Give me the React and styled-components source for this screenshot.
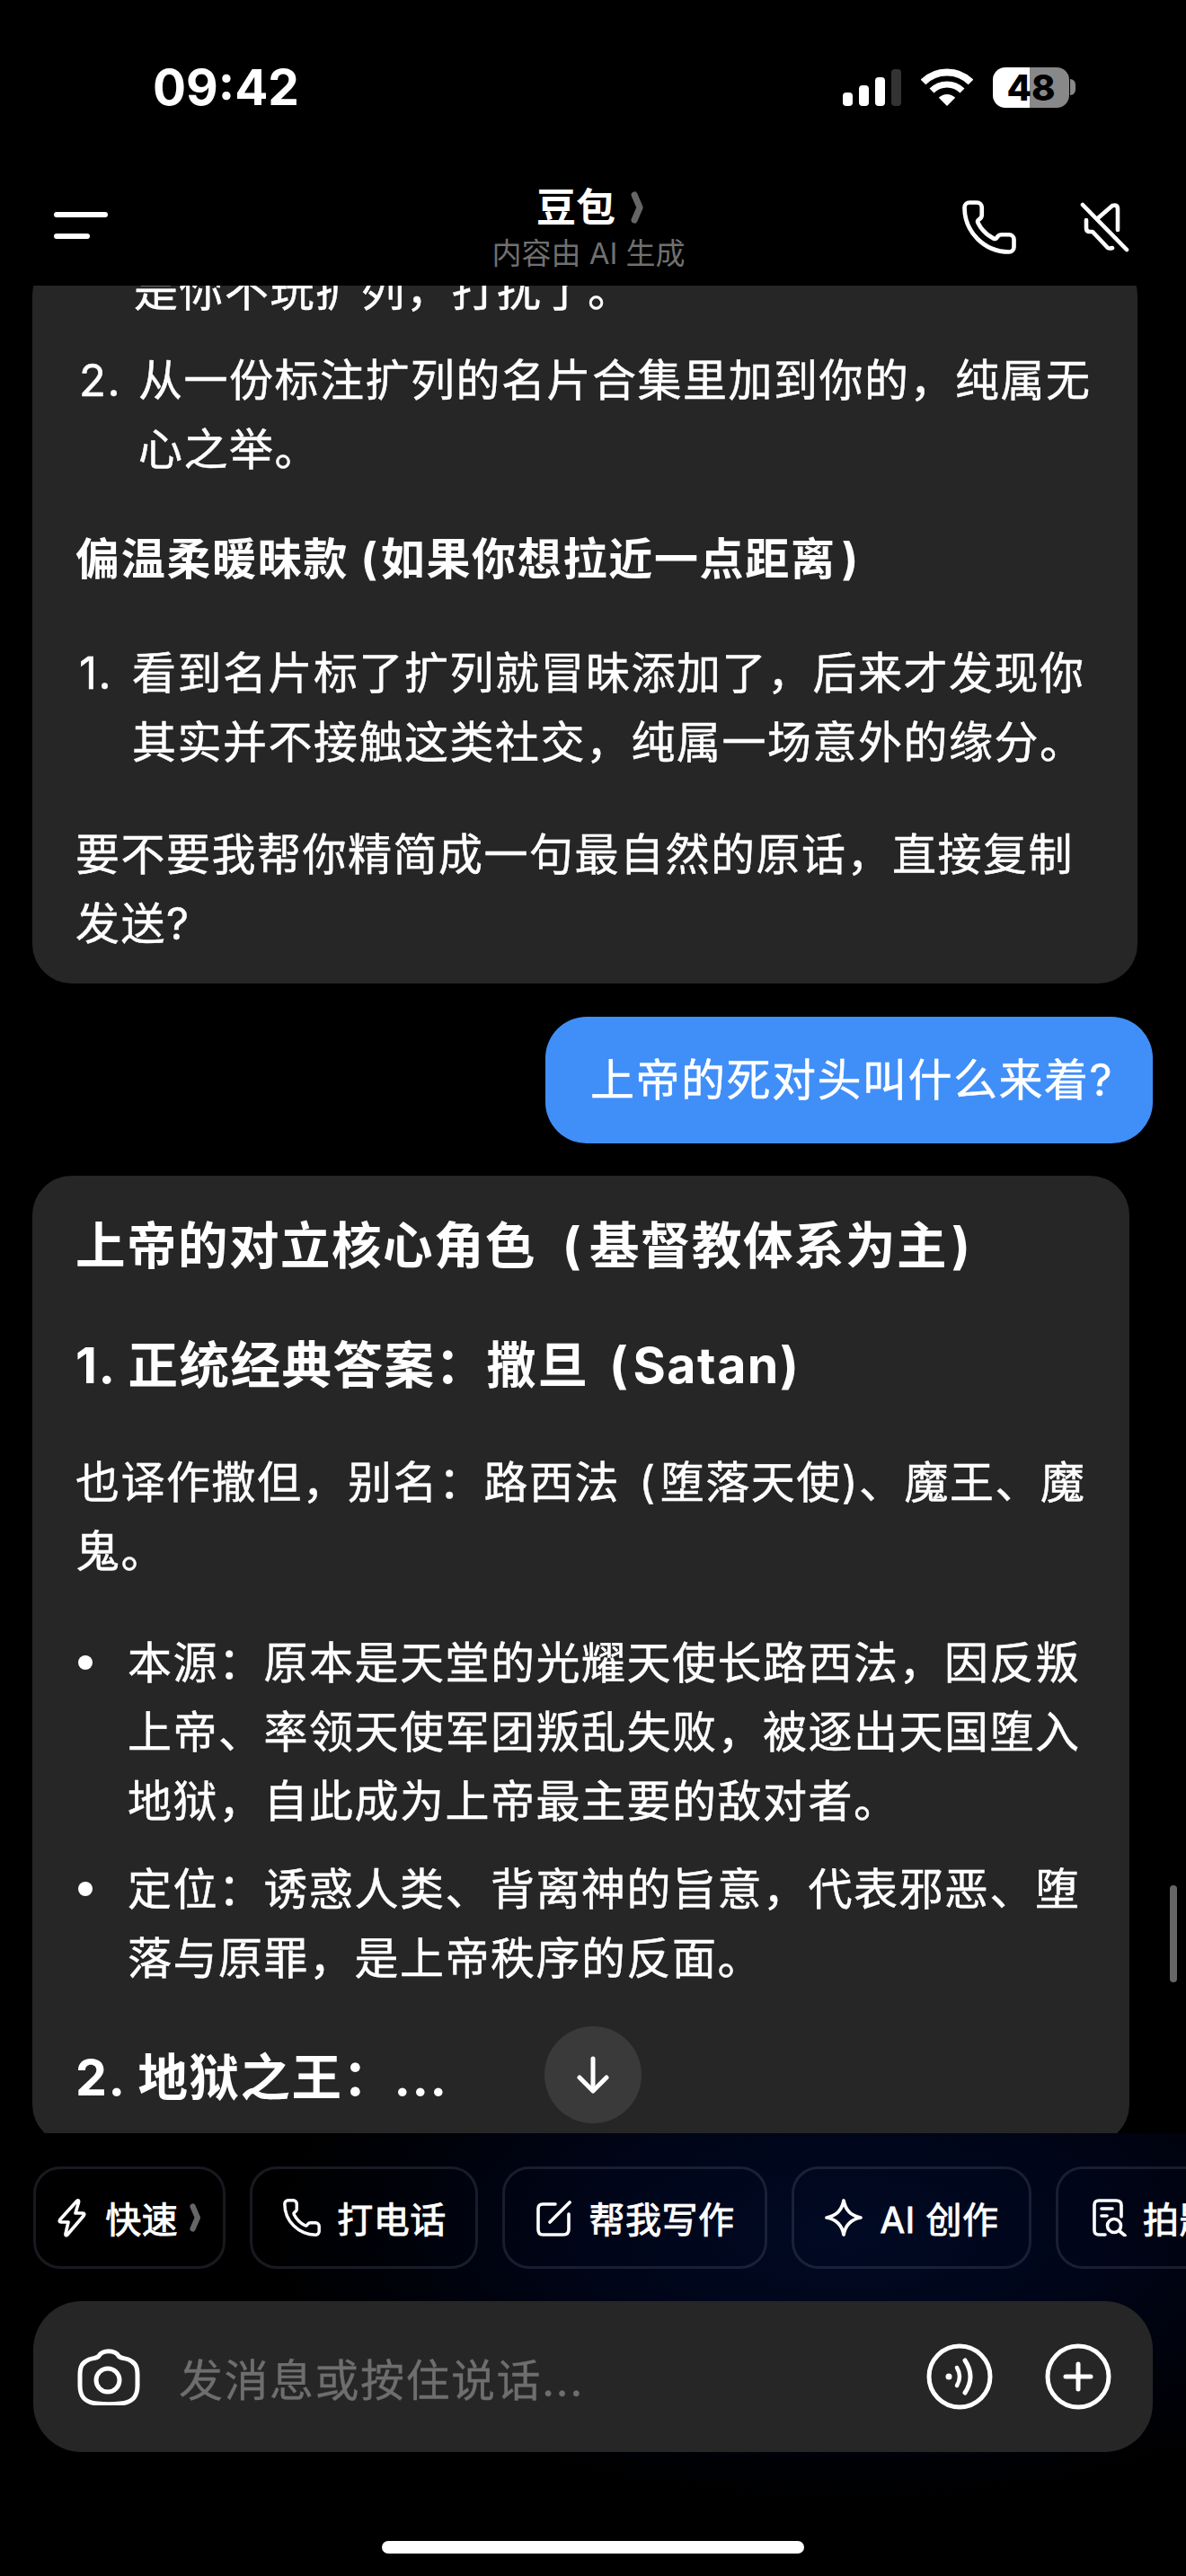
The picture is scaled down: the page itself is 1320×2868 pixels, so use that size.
import styled, { createGlobalStyle } from "styled-components";
import { Phone } from "lucide-react";


const GlobalStyle = createGlobalStyle`
	html, body {
		margin: 0;
		background: #000;
	}

	* { box-sizing: border-box; }
`;


const Signal = () => (
	<svg width="65" height="41" viewBox="0 0 65 41">
		<rect x="0" y="26" width="11" height="15" rx="4" fill="#fff"/>
		<rect x="18" y="18" width="11" height="23" rx="4" fill="#fff"/>
		<rect x="36" y="9" width="11" height="32" rx="4" fill="#fff"/>
		<rect x="54" y="0" width="11" height="41" rx="4" fill="#333"/>
	</svg>
);

const Wifi = () => (
	<svg width="58" height="42" viewBox="0 0 58 42" fill="none" stroke="#fff">
		<path d="M2.5 15.5A37.5 37.5 0 0 1 55.5 15.5" strokeWidth="8"/>
		<path d="M12 25A24 24 0 0 1 46 25" strokeWidth="7"/>
		<path d="M29 42L19.8 32.8A13 13 0 0 1 38.2 32.8Z" fill="#fff" stroke="none"/>
	</svg>
);

const Chevron = ({ size = 36 }) => (
	<svg width={size * 0.45} height={size} viewBox="0 0 16 36" fill="none">
		<path d="M5 4L11 18L5 32" stroke="#666" strokeWidth="7" strokeLinecap="round" strokeLinejoin="round"/>
	</svg>
);

const MuteIcon = () => (
	<svg width="56" height="56" viewBox="0 0 56 56" fill="none" stroke="#fff" strokeWidth="4.6" strokeLinecap="round" strokeLinejoin="round">
		<path d="M3 3L52 53"/>
		<path d="M21 17L36 4Q42 2 42 8V31"/>
		<path d="M7 20V29Q7 33 11 33H14L31 51Q33 52 36 51"/>
	</svg>
);

const ArrowIcon = () => (
	<svg width="38" height="42" viewBox="0 0 38 42" fill="none" stroke="#fff" strokeWidth="5" strokeLinecap="round" strokeLinejoin="round">
		<path d="M19 3V38"/>
		<path d="M4 24L19 39L34 24"/>
	</svg>
);

const Bolt = () => (
	<svg width="34" height="44" viewBox="0 0 34 44" fill="none" stroke="#fff" strokeWidth="3.6" strokeLinejoin="round">
		<path d="M23 3Q25 2 24.5 5L21 17H29Q32 17 30 20L12 41Q9.5 43 10 40L13 27H5Q2 27 4 24Z"/>
	</svg>
);

const WriteIcon = () => (
	<svg width="42" height="42" viewBox="0 0 42 42" fill="none" stroke="#fff" strokeLinecap="round" strokeLinejoin="round">
		<path d="M22 6H8Q3 6 3 11V34Q3 40 8 40H31Q37 40 37 34V17" strokeWidth="3.6"/>
		<path d="M16 26L38 4" strokeWidth="3.8"/>
	</svg>
);

const Star = () => (
	<svg width="44" height="44" viewBox="0 0 44 44" fill="none" stroke="#fff" strokeWidth="3.8" strokeLinejoin="round">
		<path d="M22 3C24 14 30 20 41 22C30 24 24 30 22 41C20 30 14 24 3 22C14 20 20 14 22 3Z"/>
	</svg>
);

const ScanDoc = () => (
	<svg width="38" height="42" viewBox="0 0 38 42" fill="none" stroke="#fff" strokeWidth="3.6" strokeLinecap="round" strokeLinejoin="round">
		<path d="M14 40H7Q2 40 2 35V7Q2 2 7 2H26Q32 2 32 7V20"/>
		<path d="M10 11H22"/>
		<path d="M10 19H16"/>
		<circle cx="24" cy="30" r="7.5"/>
		<path d="M30 36L36 41"/>
	</svg>
);

const Camera = () => (
	<svg width="70" height="64" viewBox="0 0 70 64" fill="none" stroke="#fff" strokeWidth="5" strokeLinejoin="round">
		<path d="M24 9C28 2 42 2 46 9C48 12 52 11 57 13C64 16 67 20 67 30V42C67 56 60 61 48 62C40 63 30 63 22 62C10 61 3 56 3 42V30C3 20 6 16 13 13C18 11 22 12 24 9Z"/>
		<circle cx="34" cy="36" r="13"/>
	</svg>
);

const VoiceIcon = () => (
	<svg width="74" height="74" viewBox="0 0 74 74" fill="none" stroke="#fff" strokeLinecap="round">
		<circle cx="37" cy="37" r="34" strokeWidth="5"/>
		<circle cx="25" cy="37" r="3.5" fill="#fff" stroke="none"/>
		<path d="M34 27Q40 37 34 47" strokeWidth="4.5"/>
		<path d="M43 19Q55 37 43 55" strokeWidth="5"/>
	</svg>
);

const PlusIcon = () => (
	<svg width="74" height="74" viewBox="0 0 74 74" fill="none" stroke="#fff" strokeLinecap="round">
		<circle cx="37" cy="37" r="34" strokeWidth="5"/>
		<path d="M37 23V51M23 37H51" strokeWidth="5"/>
	</svg>
);


const App = () => {
	return <Page>
		<GlobalStyle/>

		<StatusBar>
			<Time>09:42</Time>
			<StatusIcons>
				<Signal/>
				<Wifi/>
				<Battery>
					<BatteryBody>48</BatteryBody>
					<BatteryNub/>
				</Battery>
			</StatusIcons>
		</StatusBar>

		<NavBar>
			<MenuButton>
				<MenuLine $width={60}/>
				<MenuLine $width={40}/>
			</MenuButton>
			<TitleBlock>
				<Title>豆包 <Chevron/></Title>
				<Subtitle>内容由 AI 生成</Subtitle>
			</TitleBlock>
			<NavActions>
				<Phone size={66} color="#fff" strokeWidth={1.7}/>
				<MuteIcon/>
			</NavActions>
		</NavBar>

		<ChatViewport>
			<ChatScroll>
				<Card $width={1230}>
					<ListItem $indent={65}>
						<span/>
						<div>是你不玩扩列，打扰了。</div>
					</ListItem>
					<ListItem $indent={70} $gap={23}>
						<Marker>2.</Marker>
						<div>从一份标注扩列的名片合集里加到你的，纯属无<br/>心之举。</div>
					</ListItem>
					<SmallHeading>偏温柔暖昧款 <Paren $before={0} $after={2}>(</Paren>如果你想拉近一点距离<Paren $before={6}>)</Paren></SmallHeading>
					<ListItem $indent={63} $gap={50}>
						<Marker>1.</Marker>
						<div>看到名片标了扩列就冒昧添加了，后来才发现你<br/>其实并不接触这类社交，纯属一场意外的缘分。</div>
					</ListItem>
					<Para $gap={48}>要不要我帮你精简成一句最自然的原话，直接复制<br/>发送?</Para>
				</Card>

				<UserBubble>上帝的死对头叫什么来着?</UserBubble>

				<Card $width={1221} $top={39} $bottom={36} $gap={36}>
					<Heading>上帝的对立核心角色 <Paren $before={14} $after={8}>(</Paren>基督教体系为主<Paren $before={4}>)</Paren></Heading>
					<Heading $gap={56}>1. 正统经典答案：撒旦 <Paren $before={8} $after={4}>(</Paren>Satan)</Heading>
					<Para $gap={54}>也译作撒但，别名：路西法 <Paren $before={6} $after={4}>(</Paren>堕落天使)、魔王、魔<br/>鬼。</Para>
					<ListItem $indent={58} $gap={47}>
						<Bullet/>
						<div>本源：原本是天堂的光耀天使长路西法，因反叛<br/>上帝、率领天使军团叛乱失败，被逐出天国堕入<br/>地狱，自此成为上帝最主要的敌对者。</div>
					</ListItem>
					<ListItem $indent={58} $gap={21}>
						<Bullet/>
						<div>定位：诱惑人类、背离神的旨意，代表邪恶、堕<br/>落与原罪，是上帝秩序的反面。</div>
					</ListItem>
					<Heading $gap={55}>2. 地狱之王：...</Heading>
				</Card>
			</ChatScroll>

			<ScrollDown><ArrowIcon/></ScrollDown>
			<Scrollbar/>
		</ChatViewport>

		<Footer>
			<ChipRow>
				<Chip $width={214} $gap={20}><Bolt/><ChipLabel>快速</ChipLabel><ChipTail><Chevron size={32}/></ChipTail></Chip>
				<Chip $width={254} $gap={16}><Phone size={46} color="#fff" strokeWidth={1.8}/><ChipLabel>打电话</ChipLabel></Chip>
				<Chip $width={295}><WriteIcon/><ChipLabel>帮我写作</ChipLabel></Chip>
				<Chip $width={267}><Star/><ChipLabel>AI 创作</ChipLabel></Chip>
				<Chip $width={300}><ScanDoc/><ChipLabel>拍题答疑</ChipLabel></Chip>
			</ChipRow>

			<InputBar>
				<Camera/>
				<Placeholder>发消息或按住说话...</Placeholder>
				<InputActions>
					<VoiceIcon/>
					<PlusIcon/>
				</InputActions>
			</InputBar>

			<HomeIndicator/>
		</Footer>
	</Page>
}


export default App;


const Page = styled.div`
	width: 1320px;
	height: 2868px;
	overflow: hidden;
	display: flex;
	flex-direction: column;
	background: #000;
	color: #fff;
	font-family: Inter, "Noto Sans CJK SC", sans-serif;
`;

const StatusBar = styled.div`
	height: 188px;
	flex: none;
	padding: 70px 123px 0 170px;
	display: flex;
	align-items: flex-start;
	justify-content: space-between;
`;

const Time = styled.div`
	font-size: 55px;
	line-height: 54px;
	font-weight: 700;
`;

const StatusIcons = styled.div`
	display: flex;
	align-items: center;
	gap: 22px;
	height: 54px;
`;

const Battery = styled.div`
	display: flex;
	align-items: center;
	gap: 1px;
`;

const BatteryBody = styled.div`
	width: 85px;
	height: 45px;
	border-radius: 14px;
	background: linear-gradient(90deg, #fff 48%, #888 48%);
	color: #000;
	font-size: 40px;
	line-height: 45px;
	font-weight: 800;
	text-align: center;
`;

const BatteryNub = styled.div`
	width: 6px;
	height: 18px;
	border-radius: 0 6px 6px 0;
	background: #888;
`;

const NavBar = styled.div`
	height: 130px;
	flex: none;
	padding: 0 62px 0 60px;
	display: grid;
	grid-template-columns: 1fr auto 1fr;
	align-items: center;
`;

const MenuButton = styled.div`
	display: flex;
	flex-direction: column;
	gap: 18px;
	margin-top: -4px;
`;

const MenuLine = styled.span`
	display: block;
	width: ${props => props.$width}px;
	height: 6px;
	border-radius: 3px;
	background: #fff;
`;

const TitleBlock = styled.div`
	display: flex;
	flex-direction: column;
	align-items: center;
	gap: 4px;
	margin-left: -8px;
`;

const Title = styled.div`
	display: flex;
	align-items: center;
	gap: 16px;
	margin-left: 4px;
	font-size: 44px;
	line-height: 54px;
	font-weight: 700;
`;

const Subtitle = styled.div`
	font-size: 33px;
	line-height: 40px;
	color: #707070;
`;

const NavActions = styled.div`
	display: flex;
	align-items: center;
	justify-content: flex-end;
	gap: 68px;
`;

const ChatViewport = styled.div`
	position: relative;
	height: 2057px;
	flex: none;
	overflow: hidden;
`;

const ChatScroll = styled.div`
	margin-top: -33px;
	display: flex;
	flex-direction: column;
	font-size: 49px;
	line-height: 77px;
	letter-spacing: 1.5px;
	white-space: nowrap;
	-webkit-text-stroke: 0.5px #fff;
`;

const Card = styled.div`
	width: ${props => props.$width}px;
	flex: none;
	margin: ${props => props.$gap || 0}px 0 0 36px;
	padding: ${props => props.$top || 0}px 0 ${props => props.$bottom || 28}px 48px;
	border-radius: 44px;
	background: #262626;
`;

const ListItem = styled.div`
	display: grid;
	grid-template-columns: ${props => props.$indent}px 1fr;
	margin-top: ${props => props.$gap || 0}px;
`;

const Marker = styled.span`
	margin-left: 4px;
`;

const Bullet = styled.span`
	display: block;
	width: 16px;
	height: 16px;
	margin: 30px 0 0 3px;
	border-radius: 50%;
	background: #fff;
`;

const Para = styled.p`
	margin: ${props => props.$gap}px 0 0;
`;

const Paren = styled.span`
	margin-left: ${props => props.$before || 0}px;
	margin-right: ${props => props.$after || 0}px;
`;

const SmallHeading = styled.div`
	margin-top: 45px;
	font-weight: 700;
	letter-spacing: 1.7px;
	-webkit-text-stroke: 0;
`;

const Heading = styled.div`
	margin-top: ${props => props.$gap || 0}px;
	font-size: 55.5px;
	font-weight: 700;
	letter-spacing: 1.5px;
	-webkit-text-stroke: 0;
`;

const UserBubble = styled.div`
	align-self: flex-end;
	margin: 37px 37px 0 0;
	width: 676px;
	height: 141px;
	padding: 0 0 0 50px;
	display: flex;
	align-items: center;
	border-radius: 46px;
	background: #408ff8;
`;

const ScrollDown = styled.div`
	position: absolute;
	left: 606px;
	bottom: 11px;
	width: 108px;
	height: 108px;
	border-radius: 50%;
	background: #3a3a3a;
	display: flex;
	align-items: center;
	justify-content: center;
`;

const Scrollbar = styled.div`
	position: absolute;
	right: 10px;
	top: 1781px;
	width: 8px;
	height: 108px;
	border-radius: 4px;
	background: #666;
`;

const Footer = styled.div`
	flex: 1;
	display: flex;
	flex-direction: column;
	background: radial-gradient(ellipse 640px 300px at 940px 110px, #010a24 0%, #000518 45%, #000 100%);
`;

const ChipRow = styled.div`
	display: flex;
	gap: 27px;
	padding: 37px 0 36px 37px;
	overflow: hidden;
`;

const Chip = styled.div`
	width: ${props => props.$width}px;
	height: 114px;
	flex: none;
	display: flex;
	align-items: center;
	justify-content: center;
	gap: ${props => props.$gap || 18}px;
	border: 3px solid rgba(190, 200, 240, 0.13);
	border-radius: 30px;
`;

const ChipTail = styled.span`
	display: flex;
	margin-left: -8px;
`;

const ChipLabel = styled.span`
	font-size: 40px;
	font-weight: 400;
	letter-spacing: 0.5px;
	white-space: nowrap;
	-webkit-text-stroke: 0.9px #fff;
`;

const InputBar = styled.div`
	width: 1246px;
	height: 168px;
	flex: none;
	margin-left: 37px;
	padding: 0 46px 0 49px;
	display: flex;
	align-items: center;
	border-radius: 54px;
	background: #262626;
`;

const Placeholder = styled.div`
	flex: 1;
	margin-left: 43px;
	font-size: 49px;
	letter-spacing: 1.5px;
	color: #6e6e6e;
	-webkit-text-stroke: 0.3px #6e6e6e;
`;

const InputActions = styled.div`
	display: flex;
	align-items: center;
	gap: 58px;
`;

const HomeIndicator = styled.div`
	width: 470px;
	height: 14px;
	flex: none;
	margin: 99px auto 0;
	border-radius: 7px;
	background: #fff;
`;
